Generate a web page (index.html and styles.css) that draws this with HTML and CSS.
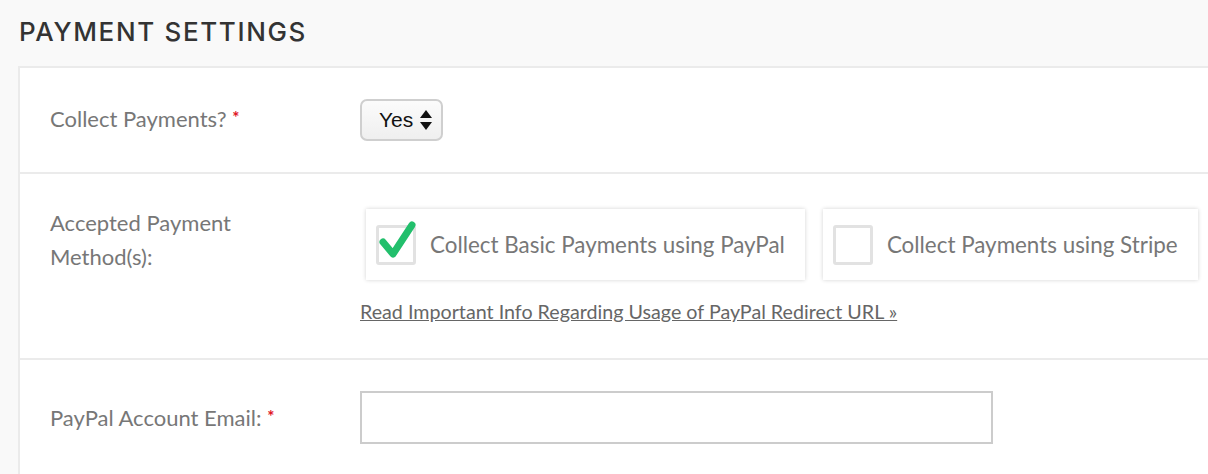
FILE: index.html
```html
<!DOCTYPE html>
<html>
<head>
<meta charset="utf-8">
<link rel="stylesheet" href="styles.css">
</head>
<body>
<div class="page">
  <h2 class="title">PAYMENT SETTINGS</h2>
  <div class="panel">
    <div class="row row-collect">
      <div class="label">Collect Payments? <span class="req">*</span></div>
      <div class="control">
        <div class="select">
          <span>Yes</span>
          <svg class="arrows" width="14" height="22" viewBox="0 0 14 22"><path d="M7 1 L13 9 H1 Z" fill="#111"/><path d="M7 21 L13 13 H1 Z" fill="#111"/></svg>
        </div>
      </div>
    </div>
    <div class="row row-methods">
      <div class="label">Accepted Payment Method(s):</div>
      <div class="control">
        <div class="cards">
          <label class="card">
            <span class="box checked">
              <svg class="check" width="40" height="44" viewBox="0 0 40 44"><path d="M6 23 L16 35 L35 6" fill="none" stroke="#22bf6c" stroke-width="7" stroke-linecap="round" stroke-linejoin="round"/></svg>
            </span>
            <span class="card-text">Collect Basic Payments using PayPal</span>
          </label>
          <label class="card">
            <span class="box"></span>
            <span class="card-text">Collect Payments using Stripe</span>
          </label>
        </div>
        <a class="info-link" href="#">Read Important Info Regarding Usage of PayPal Redirect URL »</a>
      </div>
    </div>
    <div class="row row-email">
      <div class="label">PayPal Account Email: <span class="req">*</span></div>
      <div class="control">
        <input class="text-input" type="text">
      </div>
    </div>
  </div>
</div>
</body>
</html>
```
FILE: styles.css
```css
html, body {
  margin: 0;
  padding: 0;
  background: #f9f9f9;
}
body {
  font-family: Lato, "Open Sans", sans-serif;
  color: #777;
}
.page {
  padding: 17px 0 0 18px;
}
.title {
  margin: 0 0 20px 1px;
  font-family: Inter, "Open Sans", sans-serif;
  font-weight: 500;
  font-size: 26px;
  line-height: 29px;
  letter-spacing: 1.65px;
  color: #333;
}
.panel {
  background: #fff;
  border: 2px solid #ebebeb;
  border-right: none;
  border-bottom: none;
}
.row {
  display: grid;
  grid-template-columns: 280px 1fr;
  column-gap: 30px;
  padding-left: 30px;
  border-bottom: 2px solid #ebebeb;
}
.row-collect {
  align-items: center;
  height: 104px;
}
.row-methods {
  padding-top: 35px;
  padding-bottom: 35px;
}
.row-email {
  align-items: center;
  height: 114px;
  border-bottom: none;
}
.label {
  font-size: 22px;
  line-height: 34px;
  color: #777;
}
.row-collect .label {
  margin-top: -3px;
}
.row-methods .label {
  margin-top: -3px;
}
.req {
  color: #e0141e;
  font-weight: 700;
  font-size: 17px;
  vertical-align: 3px;
}
.select {
  display: inline-flex;
  align-items: center;
  gap: 6px;
  height: 38px;
  padding: 0 8px 0 17px;
  border: 2px solid #cfcfcf;
  border-radius: 7px;
  background: linear-gradient(#fbfbfb, #efefef);
  font-family: "Liberation Sans", Arial, sans-serif;
  font-size: 21px;
  color: #111;
}
.arrows {
  display: block;
}
.cards {
  display: flex;
  gap: 18px;
  margin-left: 6px;
}
.card {
  display: flex;
  align-items: center;
  gap: 14px;
  height: 71px;
  padding: 0 20px 0 10px;
  background: #fff;
  box-shadow: 0 0 4px rgba(0,0,0,0.18);
  box-sizing: border-box;
}
.box {
  position: relative;
  width: 40px;
  height: 40px;
  box-sizing: border-box;
  border: 3px solid #e2e2e2;
  border-radius: 3px;
  background: #fff;
  flex: none;
}
.check {
  position: absolute;
  left: -2px;
  top: -9px;
}
.card-text {
  font-size: 22.4px;
  color: #777;
  white-space: nowrap;
}
.info-link {
  display: inline-block;
  margin-top: 20px;
  font-size: 19.7px;
  color: #666;
  text-decoration: underline;
}
.text-input {
  display: block;
  width: 633px;
  height: 53px;
  box-sizing: border-box;
  border: 2px solid #cccccc;
  background: #fff;
  margin: 0;
  padding: 0 10px;
}
```
